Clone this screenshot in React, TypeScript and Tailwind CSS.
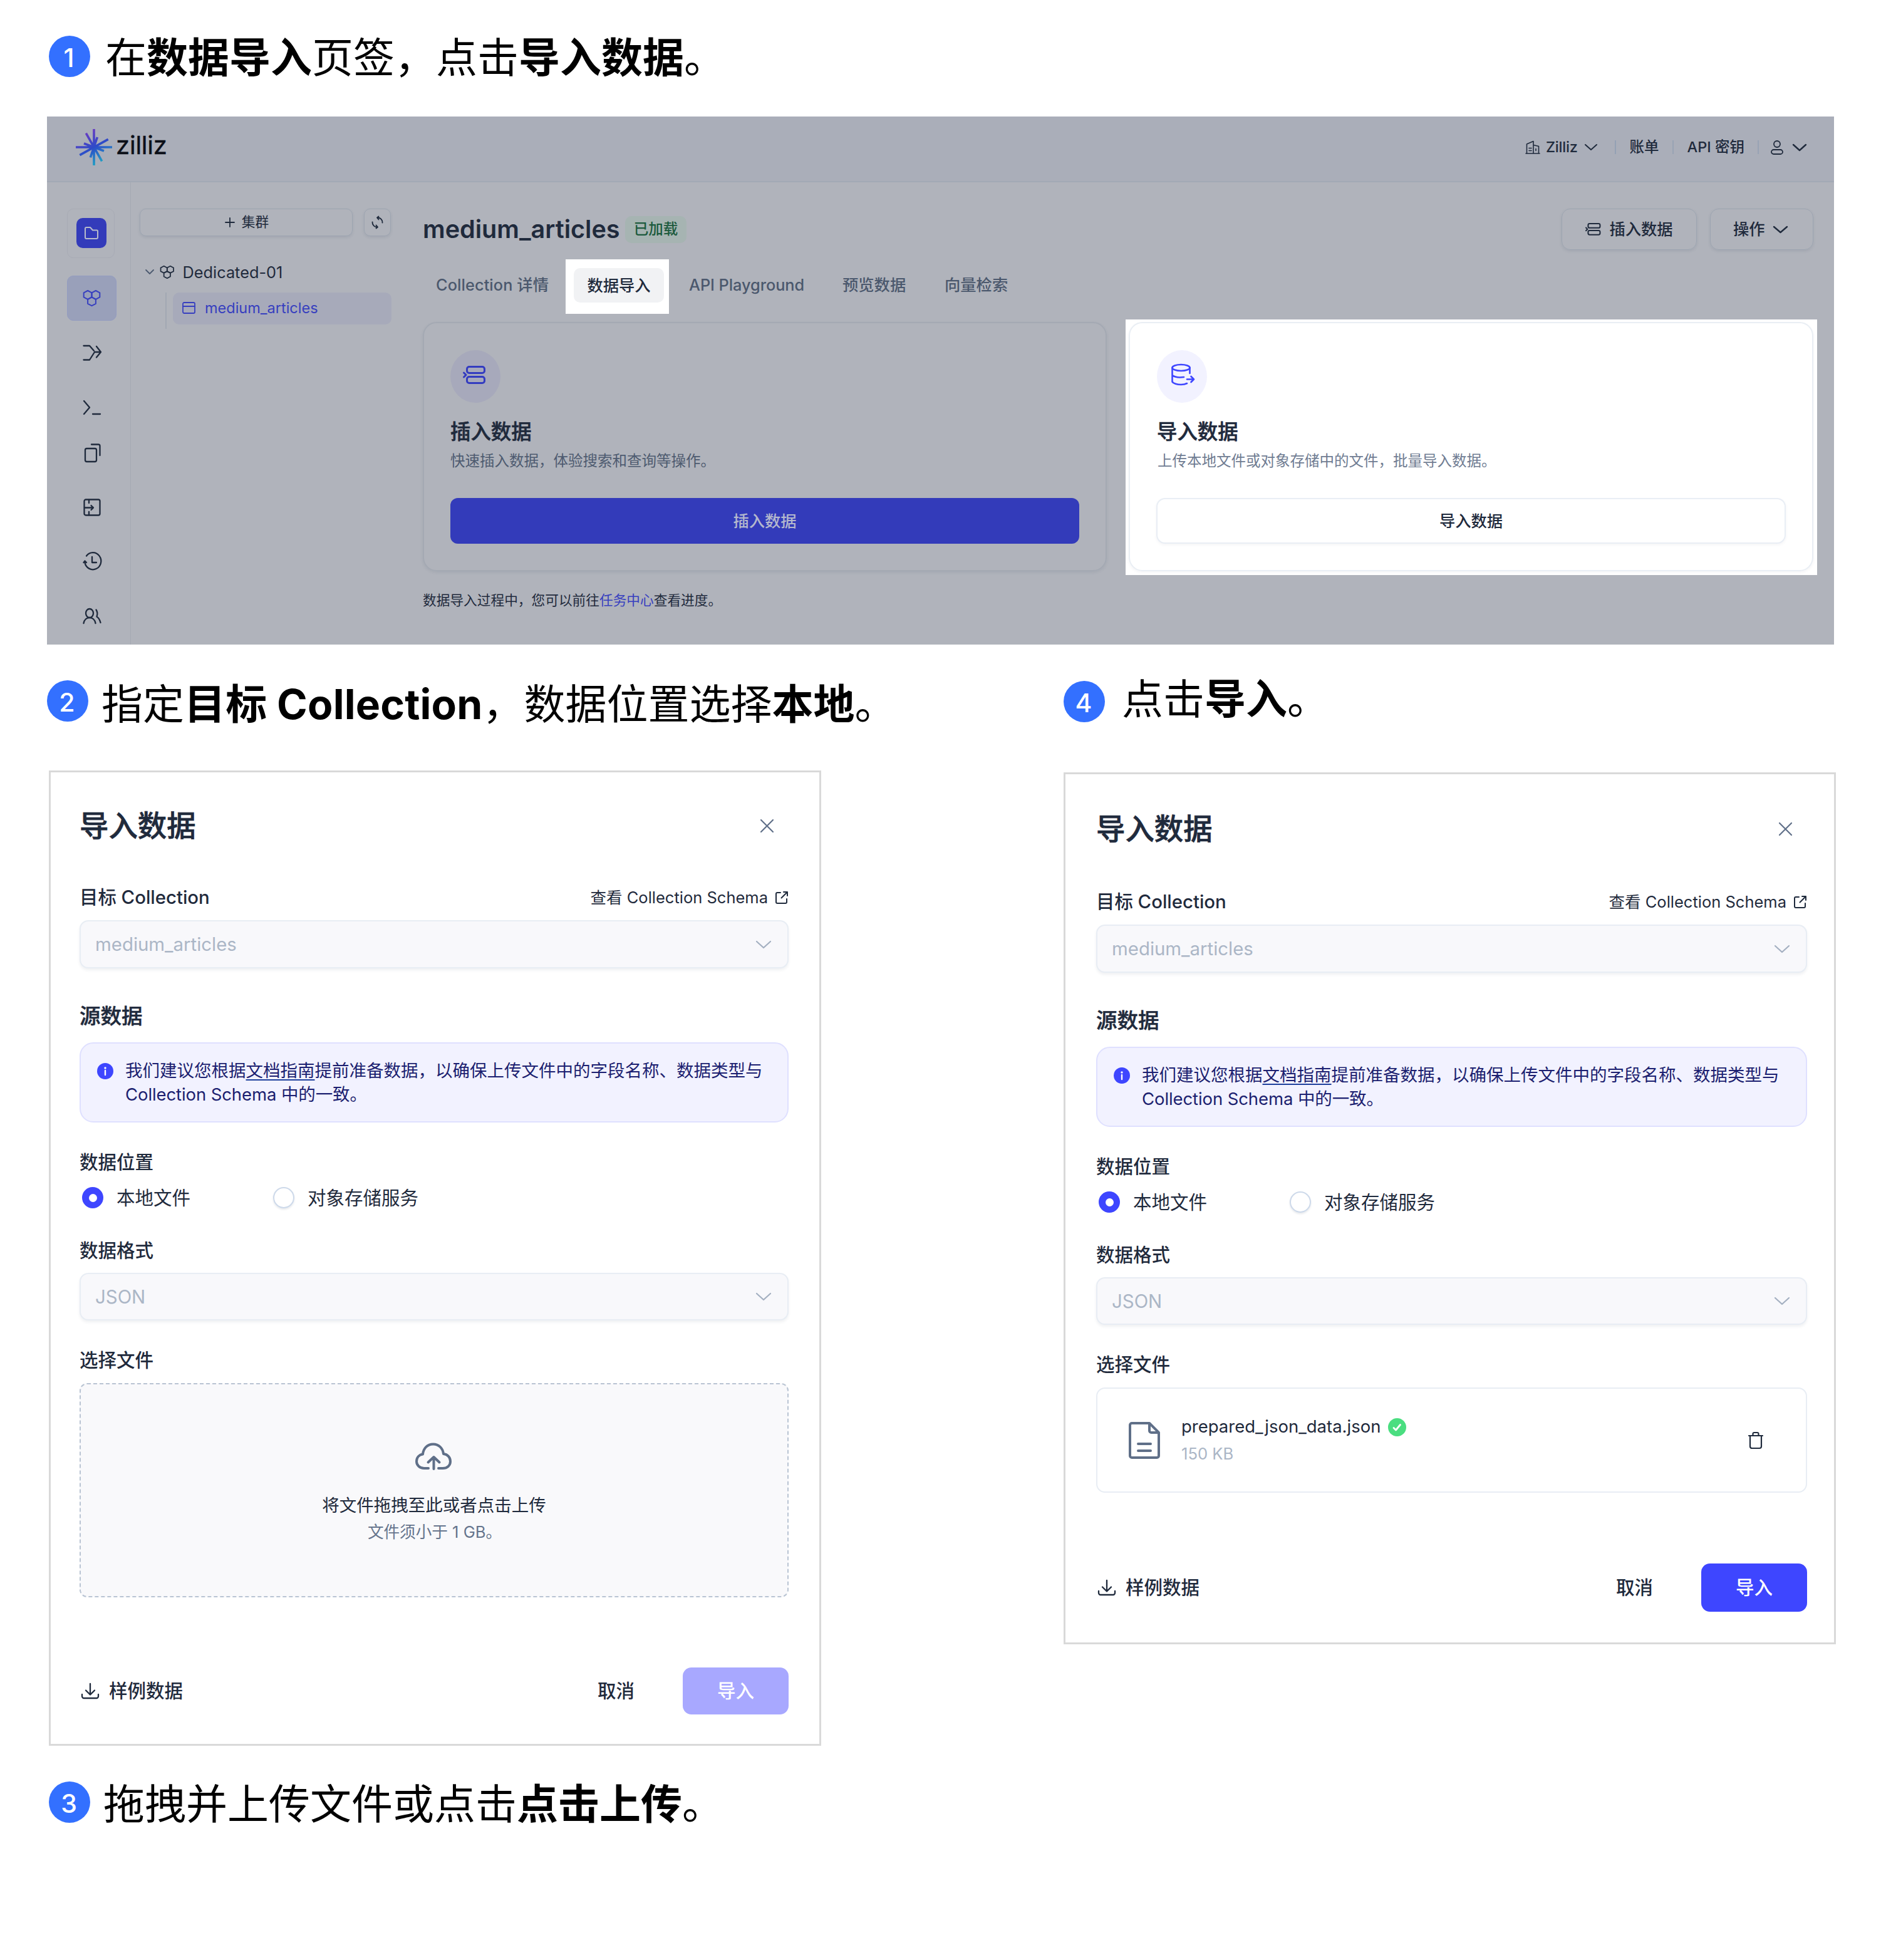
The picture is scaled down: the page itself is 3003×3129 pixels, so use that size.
import type { ReactNode } from "react";

type IconProps = { w: number; h: number; sw?: number; className?: string; children: ReactNode };

function Icon({ w, h, sw = 2, className = "", children }: IconProps) {
  return (
    <svg
      width={w}
      height={h}
      viewBox={`0 0 ${w} ${h}`}
      fill="none"
      stroke="currentColor"
      strokeWidth={sw}
      strokeLinecap="round"
      strokeLinejoin="round"
      className={`block shrink-0 overflow-visible ${className}`}
    >
      {children}
    </svg>
  );
}

function Chevron({ w, h, sw = 2, className = "" }: { w: number; h: number; sw?: number; className?: string }) {
  return (
    <Icon w={w} h={h} sw={sw} className={className}>
      <path d={`M1 1L${w / 2} ${h - 1}L${w - 1} 1`} />
    </Icon>
  );
}

function HexIcon({ scale = 1, sw = 2, className = "" }: { scale?: number; sw?: number; className?: string }) {
  const hex = "l6.4 3.4v7l-6.4 3.4l-6.4 -3.4v-7z";
  return (
    <svg
      width={27 * scale}
      height={26 * scale}
      viewBox="0 0 27 26"
      fill="none"
      stroke="currentColor"
      strokeWidth={sw}
      strokeLinejoin="round"
      className={`block shrink-0 overflow-visible ${className}`}
    >
      <path d={`M7.1 1${hex}`} />
      <path d={`M19.9 1${hex}`} />
      <path d={`M13.5 11.4${hex}`} />
    </svg>
  );
}

function RowsIcon({ scale = 1, sw = 3, className = "" }: { scale?: number; sw?: number; className?: string }) {
  return (
    <svg
      width={36 * scale}
      height={29 * scale}
      viewBox="0 0 36 29"
      fill="none"
      stroke="currentColor"
      strokeWidth={sw}
      strokeLinecap="round"
      strokeLinejoin="round"
      className={`block shrink-0 overflow-visible ${className}`}
    >
      <rect x="6.5" y="1.5" width="28" height="10" rx="3.5" />
      <rect x="6.5" y="17.5" width="28" height="10" rx="3.5" />
      <path d="M1.5 11l3.5 3.5L1.5 18" />
    </svg>
  );
}

function Logo() {
  return (
    <div className="flex items-center">
      <svg width="58" height="58" viewBox="0 0 174 174" fill="none" className="block">
        <defs>
          <linearGradient id="ray" gradientUnits="userSpaceOnUse" x1="50" y1="10" x2="124" y2="164">
            <stop offset="0" stopColor="#6c3cc2" />
            <stop offset="0.5" stopColor="#2d4bc8" />
            <stop offset="1" stopColor="#1fa6c4" />
          </linearGradient>
        </defs>
        <path
          stroke="url(#ray)"
          strokeWidth="11"
          d="M87 0L87.1 174M0 87L174 87.1M49 20L125 154M155 49L19 125M103 39L70 136M39 69L135 105"
        />
      </svg>
      <span className="ml-[6px] -mt-[5px] text-[40px] leading-none font-normal tracking-[-0.2px] text-[#0b0f18] [-webkit-text-stroke:0.4px]">
        zilliz
      </span>
    </div>
  );
}

function Step({ n, className = "", gap, textClass = "", children }: { n: number; className?: string; gap: string; textClass?: string; children: ReactNode }) {
  return (
    <div className={`flex h-[66px] items-center ${className}`}>
      <div className="flex size-[66px] shrink-0 items-center justify-center rounded-full bg-[#3370ff] pt-[4px] pr-[2px] text-[41px] leading-none font-medium text-white">
        {n}
      </div>
      <div className={`${gap} text-[66px] leading-none whitespace-nowrap text-black ${textClass}`}>{children}</div>
    </div>
  );
}

function Header() {
  return (
    <div className="flex h-[105px] items-center justify-between border-b-2 border-[#a2a9b5] bg-[#aaaeb9] pr-[44px] pl-[46px]">
      <div className="-mt-[6px]">
        <Logo />
      </div>
      <div className="-mt-[5px] flex items-center text-[23.5px] leading-none font-medium text-[#1f2a3c]">
        <Icon w={24} h={22} sw={1.6}>
          <path d="M1 21H23M2.5 21V6L13 1.5V21M13 7.5L21.5 9.5V21M6 12.5h4M6 16.5h4M17 13.5v3" />
        </Icon>
        <span className="ml-[9px] tracking-[-0.2px]">Zilliz</span>
        <Chevron w={20} h={10} className="ml-[11px]" />
        <div className="ml-[28px] h-[22px] w-[2px] bg-[#94a1b4]" />
        <span className="ml-[22px]">账单</span>
        <div className="ml-[21px] h-[22px] w-[2px] bg-[#98a3b4]" />
        <span className="ml-[22px]">API 密钥</span>
        <div className="ml-[21px] h-[22px] w-[2px] bg-[#98a3b4]" />
        <Icon w={20} h={23} sw={1.8} className="ml-[19px]">
          <circle cx="10" cy="6" r="5" />
          <rect x="1" y="15" width="18" height="7" rx="3.5" />
        </Icon>
        <Chevron w={22} h={11} sw={2.4} className="ml-[15px]" />
      </div>
    </div>
  );
}

function SideNav() {
  return (
    <div className="flex w-[134px] shrink-0 flex-col border-r border-[#a5a9b3] pl-[32px] text-[#1f2a3c]">
      <div className="mt-[42px] flex h-[79px] w-[76px] items-center justify-center rounded-[10px] border border-[#a8abb5] pb-[1px] pl-[1px]">
        <div className="flex size-[48px] items-center justify-center rounded-[10px] bg-[#333bba] text-[#b8bccb]">
          <Icon w={22} h={20}>
            <path d="M1 3a2 2 0 0 1 2-2h6l4 4.500h6.500a1.500 1.500 0 0 1 1.500 1.500v10a2 2 0 0 1-2 2H3a2 2 0 0 1-2-2z" />
          </Icon>
        </div>
      </div>
      <div className="mt-[28px] flex h-[72px] w-[79px] items-center justify-center rounded-[10px] border border-[#939cc0] bg-[#99a0ba] text-[#373fbf]">
        <HexIcon />
      </div>
      <div className="flex w-[79px] flex-col items-center">
        <Icon w={30} h={30} sw={2.3} className="mt-[35px]">
          <path d="M1.500 5H11L18 13M1.500 27.500H11L19 15H29M22 6L29 15L22 23.500" />
        </Icon>
        <Icon w={30} h={30} sw={2.3} className="mt-[58px]">
          <path d="M2 5L11 15.500L2 26M16 26H28" />
        </Icon>
        <Icon w={30} h={30} sw={2.3} className="mt-[42px]">
          <rect x="4" y="9" width="18" height="21" rx="2.500" />
          <path d="M14 2.500H25a2.500 2.500 0 0 1 2.500 2.500V20" />
        </Icon>
        <Icon w={30} h={30} sw={2.3} className="mt-[58px]">
          <rect x="2.500" y="2.500" width="25" height="25" rx="2.500" />
          <path d="M3 15.500H17M13.500 12L17 15.500L13.500 19M10 3V8M10 22V27" />
        </Icon>
        <Icon w={30} h={30} sw={2.3} className="mt-[55px]">
          <path d="M6 7.500A13 13.500 0 1 1 3.500 18M1.500 18L3.500 15.500L6 18M15 9V18H22" />
        </Icon>
        <Icon w={30} h={30} sw={2.3} className="mt-[58px]">
          <ellipse cx="11" cy="11" rx="6" ry="7" />
          <path d="M1.500 27C2.500 21 6.500 18 11 18S19.500 21 20.500 27M21.500 5.500C24 9 24 12 22.500 16.500C26 18.500 27.500 22 28.500 26" />
        </Icon>
      </div>
    </div>
  );
}

function Tree() {
  return (
    <div className="flex w-[466px] shrink-0 flex-col pl-[14px] text-[#1f2a3c]">
      <div className="mt-[42px] flex gap-[18px]">
        <div className="flex h-[44px] w-[340px] items-center justify-center gap-[11px] rounded-[10px] border border-[#9da5b1] pl-[2px] shadow-[0_2px_4px_rgba(60,75,100,0.12)]">
          <Icon w={16} h={16} sw={1.8}>
            <path d="M8 1V15M1 8H15" />
          </Icon>
          <span className="text-[21.700px] leading-none">集群</span>
        </div>
        <div className="flex h-[44px] w-[43px] items-center justify-center rounded-[10px] border border-[#9da5b1] shadow-[0_2px_4px_rgba(60,75,100,0.12)]">
          <Icon w={19} h={18} sw={1.9}>
            <path d="M1.500 8.500A7.500 7.500 0 0 0 9.500 16.500M7.500 13.500L10 16.500L7.500 18.500M17.500 9.500A7.500 7.500 0 0 0 9.500 1.500M11.500 -0.500L9 1.500L11.500 4.500" />
          </Icon>
        </div>
      </div>
      <div className="mt-[42px] flex h-[30px] items-center">
        <Chevron w={14} h={8} sw={1.8} className="ml-[9px] text-[#4c5a70]" />
        <HexIcon scale={0.8} sw={2.2} className="ml-[10px]" />
        <span className="ml-[14px] pt-[1px] text-[25.300px] leading-none">Dedicated-01</span>
      </div>
      <div className="mt-[18px] flex">
        <div className="ml-[41px] h-[58px] w-[2px] bg-[#a2a8b3]" />
        <div className="ml-[10px] flex h-[51px] w-[349px] items-center rounded-[10px] bg-[#a7aaba] pb-[2px] pl-[15px] text-[#373fbf]">
          <Icon w={21} h={19} sw={1.800}>
            <rect x="1" y="1" width="19" height="17" rx="2" />
            <path d="M1 7H20" />
          </Icon>
          <span className="ml-[15px] text-[23.500px] leading-none">medium_articles</span>
        </div>
      </div>
    </div>
  );
}

function Tabs() {
  return (
    <div className="flex h-[87px] items-center text-[25.300px] leading-none font-medium text-[#4b586d]">
      <div className="w-[228px] pb-[5px] pl-[21px] tracking-[0.100px]">Collection 详情</div>
      <div className="h-[87px] w-[165px] bg-white pt-[14px] pl-[13px]">
        <div className="flex h-[55px] w-[144px] items-center justify-center rounded-[10px] bg-[#f1f2f4] text-[#1f2a3c]">数据导入</div>
      </div>
      <div className="w-[277px] pb-[5px] pl-[32px] tracking-[-0.050px]">API Playground</div>
      <div className="w-[163px] pb-[5px]">预览数据</div>
      <div className="pb-[5px]">向量检索</div>
    </div>
  );
}

function Main() {
  return (
    <div className="flex grow flex-col text-[#1f2a3c]">
      <div className="mt-[42px] flex h-[66px] items-center">
        <h1 className="pt-[2px] text-[39.600px] leading-none font-semibold">medium_articles</h1>
        <div className="ml-[8px] flex h-[43px] w-[98px] items-center justify-center rounded-[10px] bg-[#a6b4b2] pl-[1px] text-[23.500px] leading-none font-medium text-[#1c5a3d]">
          已加载
        </div>
        <div className="mr-[33px] ml-auto flex gap-[21px] text-[25.300px] leading-none font-medium">
          <div className="flex h-[66px] w-[216px] items-center rounded-[14px] border border-[#9da5b1] pl-[37px] shadow-[0_2px_4px_rgba(60,75,100,0.12)]">
            <RowsIcon scale={0.68} />
            <span className="ml-[14px]">插入数据</span>
          </div>
          <div className="flex h-[66px] w-[165px] items-center rounded-[14px] border border-[#9da5b1] pl-[36px] shadow-[0_2px_4px_rgba(60,75,100,0.12)]">
            <span>操作</span>
            <Chevron w={23} h={11} sw={2.4} className="ml-[13px]" />
          </div>
        </div>
      </div>
      <div className="mt-[15px]">
        <Tabs />
      </div>
      <div className="mt-[9px] flex">
        <div className="mt-[4px] h-[398px] w-[1092px] rounded-[22px] border-2 border-[#a4a9b3] px-[42px] pt-[43px] shadow-[0_2px_4px_rgba(60,75,100,0.1)]">
          <div className="flex h-[84px] w-[80px] items-center justify-center rounded-[50%] bg-[#a7a9bb] pr-[4px] pb-[6px] text-[#333bc0]">
            <RowsIcon />
          </div>
          <h2 className="mt-[30px] text-[32.400px] leading-[34px] font-medium [-webkit-text-stroke:0.6px]">插入数据</h2>
          <p className="mt-[16px] text-[23.500px] leading-[26px] text-[#4e5b70]">快速插入数据，体验搜索和查询等操作。</p>
          <div className="mt-[46px] flex h-[73px] items-center justify-center rounded-[12px] bg-[#333bba] text-[25.300px] leading-none font-medium text-[#b4b8cd]">
            插入数据
          </div>
        </div>
        <div className="ml-[30px] h-[408px] w-[1104px] bg-white pt-[4px] pl-[5px]">
          <div className="h-[398px] w-[1093px] rounded-[22px] border-2 border-[#e9eef4] px-[42px] pt-[43px] shadow-[0_2px_4px_rgba(60,75,100,0.06)]">
            <div className="ml-[1px] flex h-[84px] w-[80px] items-center justify-center rounded-[50%] bg-[#f2f2ff] pb-[7px] pl-[1px] text-[#3e46ff]">
              <Icon w={36} h={34} sw={2.600}>
                <ellipse cx="15.500" cy="6" rx="14" ry="5" />
                <path d="M1.500 6V28.500C3 31 9 33 15.500 33C19 33 22 32.500 25 31M1.500 18C5 21 12 22 20 21M29.500 6V15M25 24.500H35M31.500 20L36 24.500L31.500 29" />
              </Icon>
            </div>
            <h2 className="mt-[30px] ml-[1px] text-[32.400px] leading-[34px] font-medium [-webkit-text-stroke:0.6px]">导入数据</h2>
            <p className="mt-[16px] ml-[2px] text-[23.500px] leading-[26px] text-[#6f7c92]">上传本地文件或对象存储中的文件，批量导入数据。</p>
            <div className="mt-[46px] flex h-[73px] items-center justify-center rounded-[14px] border-2 border-[#e9eef5] bg-white text-[25.300px] leading-none font-medium shadow-[0_2px_4px_rgba(60,75,100,0.06)]">
              导入数据
            </div>
          </div>
        </div>
      </div>
      <p className="mt-[27px] text-[21.700px] leading-[26px]">
        数据导入过程中，您可以前往<span className="text-[#373fbf]">任务中心</span>查看进度。
      </p>
    </div>
  );
}

function Select({ value, className }: { value: string; className: string }) {
  return (
    <div
      className={`flex items-center justify-between rounded-[14px] border-2 border-[#e8edf4] bg-[#f8f8fb] pr-[26px] pl-[23px] shadow-[0_3px_4px_rgba(60,75,100,0.08)] ${className}`}
    >
      <span className="pt-[1px] text-[29.400px] leading-none text-[#abb6c6]">{value}</span>
      <Chevron w={24} h={12} sw={2.200} className="text-[#a3afc0]" />
    </div>
  );
}

type DialogProps = {
  frame: string;
  intro: string;
  labelGap: string;
  sourceGap: string;
  selectHeight: string;
  footer: string;
  action: string;
  children: ReactNode;
};

function Dialog({ frame, intro, labelGap, sourceGap, selectHeight, footer, action, children }: DialogProps) {
  return (
    <div className={`flex shrink-0 flex-col border-[3px] border-[#d9d9d9] bg-white text-[#1f2a3c] ${frame}`}>
      <div className={`flex h-[50px] items-center justify-between pr-[24px] ${intro}`}>
        <h2 className="text-[46.400px] leading-none font-medium [-webkit-text-stroke:0.7px]">导入数据</h2>
        <Icon w={21} h={21} sw={2.200} className="text-[#5f6f88]">
          <path d="M1 1L20 20M20 1L1 20" />
        </Icon>
      </div>
      <div className={`flex h-[32px] items-center justify-between ${labelGap}`}>
        <span className="text-[29.400px] leading-none font-medium">目标 Collection</span>
        <span className="flex items-center gap-[12px] pr-[1px] pb-[1px] text-[25.500px] leading-none">
          查看 Collection Schema
          <Icon w={20} h={20} sw={2}>
            <path d="M8 2H3a2 2 0 0 0-2 2V17a2 2 0 0 0 2 2H16a2 2 0 0 0 2-2V12M13 1H19V7M19 1L9.500 10.500" />
          </Icon>
        </span>
      </div>
      <Select value="medium_articles" className={`mt-[20px] ${selectHeight}`} />
      <h3 className={`text-[33.500px] leading-[36px] font-medium [-webkit-text-stroke:0.5px] ${sourceGap}`}>源数据</h3>
      <div className="mt-[24px] flex h-[128px] rounded-[22px] border-2 border-[#dfe0ff] bg-[#f2f2ff] pt-[24px] pl-[26px]">
        <svg width="26" height="26" viewBox="0 0 26 26" className="mt-[7px] block shrink-0">
          <circle cx="13" cy="13" r="13" fill="#3e46ff" />
          <circle cx="13" cy="8" r="1.700" fill="#fff" />
          <path d="M13 12V19" stroke="#fff" strokeWidth="2.400" strokeLinecap="round" />
        </svg>
        <p className="ml-[19px] text-[27.500px] leading-[38px] whitespace-nowrap text-[#1c1f70]">
          我们建议您根据
          <span className="underline decoration-[#1d3f9c] decoration-2 underline-offset-[4px]">文档指南</span>
          提前准备数据，以确保上传文件中的字段名称、数据类型与
          <br />
          <span className="tracking-[-0.100px]">Collection Schema 中的一致。</span>
        </p>
      </div>
      <h3 className="mt-[46px] text-[29.500px] leading-[34px] font-medium">数据位置</h3>
      <div className="mt-[22px] flex h-[36px] items-center text-[29.500px] leading-none">
        <div className="ml-[4px] flex size-[34px] items-center justify-center rounded-full bg-[#3e46ff]">
          <div className="size-[13px] rounded-full bg-white" />
        </div>
        <span className="ml-[21px] pt-[1px]">本地文件</span>
        <div className="ml-[132px] size-[34px] rounded-full border-2 border-[#cdd9ea] shadow-[0_2px_3px_rgba(60,75,100,0.12)]" />
        <span className="ml-[21px] pt-[1px]">对象存储服务</span>
      </div>
      <h3 className="mt-[49px] text-[29.500px] leading-[34px] font-medium">数据格式</h3>
      <Select value="JSON" className="mt-[19px] h-[76px]" />
      <h3 className="mt-[46px] text-[29.500px] leading-[34px] font-medium">选择文件</h3>
      {children}
      <div className={`flex items-center text-[29.500px] leading-none font-medium ${footer}`}>
        <Icon w={28} h={25} sw={2.300} className="ml-[3px]">
          <path d="M14 1V18M7 11.500L14 18.500L21 11.500M1 18V21a3 3 0 0 0 3 3H24a3 3 0 0 0 3-3V18" />
        </Icon>
        <span className="ml-[16px]">样例数据</span>
        <span className="ml-auto">取消</span>
        <div className={`ml-[77px] flex h-full w-[169px] items-center justify-center rounded-[14px] text-white ${action}`}>导入</div>
      </div>
    </div>
  );
}

export default function App() {
  return (
    <div className="flex h-[3129px] w-[3003px] flex-col overflow-hidden bg-white font-['Inter','Noto_Sans_CJK_SC',sans-serif]">
      <Step n={1} className="mt-[57px] ml-[78px]" gap="ml-[24px]" textClass="pt-[4px]">
        在<b className="font-bold">数据导入</b>页签，点击<b className="font-bold">导入数据</b>。
      </Step>

      <div className="mt-[63px] ml-[75px] flex h-[843px] w-[2853px] flex-col overflow-hidden bg-[#b0b3bb]">
        <Header />
        <div className="flex grow">
          <SideNav />
          <Tree />
          <Main />
        </div>
      </div>

      <div className="flex">
        <div className="w-[1698px] shrink-0">
          <Step n={2} className="mt-[57px] ml-[75px]" gap="ml-[21px]" textClass="pt-[10px]">
            指定<b className="font-bold tracking-[0.150px]">目标 Collection</b>，数据位置选择<b className="font-bold">本地</b>。
          </Step>
          <Dialog
            frame="mt-[78px] ml-[78px] h-[1557px] w-[1233px] pr-[49px] pl-[46px]"
            intro="mt-[60px]"
            labelGap="mt-[74px]"
            selectHeight="h-[77px]"
            sourceGap="mt-[58px]"
            footer="mt-[112px] h-[75px]"
            action="bg-[#a8a8ff]"
          >
            <div className="mt-[20px] flex h-[342px] flex-col items-center rounded-[12px] border-2 border-dashed border-[#b9c4d3] bg-[#f9f9fb] pt-[93px]">
              <Icon w={58} h={44} sw={4} className="mr-[2px] text-[#5f6f88]">
                <path d="M21 41H14C7 41 2 36 2 30C2 24 6 19.500 12 18.500C13 9 19.500 2.500 28.500 2.500C37.500 2.500 44 9 45 18C51.500 18.500 56 24 56 30C56 36.500 51 41 44 41H37M29.500 42V24M20.500 31.500L29.500 23L38.500 31.500" />
              </Icon>
              <p className="mt-[39px] text-[27.500px] leading-[34px]">将文件拖拽至此或者点击上传</p>
              <p className="mt-[9px] ml-[2px] text-[25.600px] leading-[34px] text-[#66758d]">文件须小于 1 GB。</p>
            </div>
          </Dialog>
          <Step n={3} className="mt-[57px] ml-[78px]" gap="ml-[21px]" textClass="pt-[6px]">
            拖拽并上传文件或点击<b className="font-bold">点击上传</b>。
          </Step>
        </div>

        <div className="shrink-0">
          <Step n={4} className="mt-[58px]" gap="ml-[27px]" textClass="-mt-[8px]">
            点击<b className="font-bold">导入</b>。
          </Step>
          <Dialog
            frame="mt-[80px] h-[1392px] w-[1233px] pr-[43px] pl-[49px]"
            intro="mt-[62px]"
            labelGap="mt-[76px]"
            selectHeight="h-[77px]"
            sourceGap="mt-[58px]"
            footer="mt-[113px] h-[77px]"
            action="bg-[#3e46ff]"
          >
            <div className="mt-[20px] flex h-[168px] items-center rounded-[14px] border-2 border-[#e8edf4] pr-[68px] pl-[50px]">
              <Icon w={50} h={59} sw={4} className="text-[#5f6f88]">
                <path d="M33 2H5a3 3 0 0 0-3 3V54a3 3 0 0 0 3 3H45a3 3 0 0 0 3-3V17L33 2V14a3 3 0 0 0 3 3H48M15 35H35M15 46H35" />
              </Icon>
              <div className="ml-[34px] flex flex-col">
                <div className="flex h-[34px] items-center gap-[12px]">
                  <span className="text-[27.500px] leading-none">prepared_json_data.json</span>
                  <svg width="29" height="29" viewBox="0 0 29 29" fill="none" className="block">
                    <circle cx="14.500" cy="14.500" r="14.500" fill="#4ade80" />
                    <path d="M9 15.500L12.500 19L19.500 10.500" stroke="#fff" strokeWidth="2.800" strokeLinecap="round" strokeLinejoin="round" />
                  </svg>
                </div>
                <span className="mt-[10px] text-[25.600px] leading-[32px] text-[#abb6c6]">150 KB</span>
              </div>
              <Icon w={24} h={27} sw={2.200} className="ml-auto">
                <path d="M1 6H23M3 6V23a3 3 0 0 0 3 3H18a3 3 0 0 0 3-3V6M7.500 6V3a2 2 0 0 1 2-2H14.500a2 2 0 0 1 2 2V6" />
              </Icon>
            </div>
          </Dialog>
        </div>
      </div>
    </div>
  );
}
